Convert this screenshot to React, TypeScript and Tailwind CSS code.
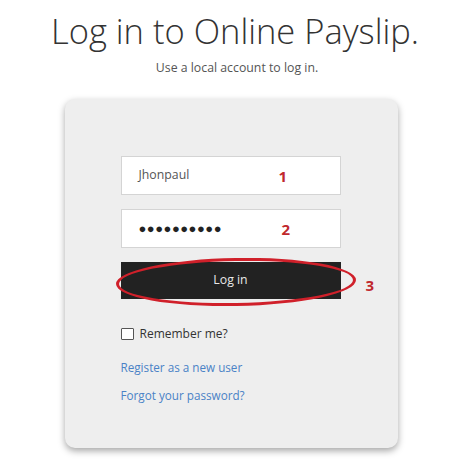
export default function App() {
  return (
    <div
      className="w-[474px] h-[474px] bg-white flex flex-col items-center overflow-hidden"
      style={{ fontFamily: '"Open Sans", "Liberation Sans", sans-serif' }}
    >
      <h1 className="mt-[11px] ml-[-4px] text-[34.5px] leading-[40px] font-light text-[#333] tracking-[0px]">
        Log in to Online Payslip.
      </h1>
      <p className="mt-[9px] text-[12.3px] leading-[16px] text-[#555]">Use a local account to log in.</p>

      <div className="mt-[23px] ml-[-12px] w-[333px] h-[349px] rounded-[10px] bg-[#eeeeee] shadow-[0_3px_7px_rgba(0,0,0,0.35)] pt-[57px] pl-[56px]">
        <div className="relative w-[220px] h-[39px] bg-white border border-[#d4d4d4] flex items-center pl-[17px]">
          <span className="text-[12.3px] text-[#555]">Jhonpaul</span>
          <span className="absolute left-[157px] top-[8px] text-[15px] font-bold text-[#c0282d]">1</span>
        </div>

        <div className="relative mt-[14px] w-[220px] h-[39px] bg-white border border-[#d4d4d4] flex items-center pl-[17px]">
          <span className="text-[13px] tracking-[0.5px] text-[#222] leading-none">●●●●●●●●●●</span>
          <span className="absolute left-[160px] top-[8px] text-[15px] font-bold text-[#c0282d]">2</span>
        </div>

        <div className="relative mt-[14px] w-[220px]">
          <button className="w-[220px] h-[37px] bg-[#222222] text-[#e8e8e8] text-[12.3px] flex items-center justify-center">
            Log in
          </button>
          <div className="absolute left-[-5px] top-[-4px] w-[240px] h-[48px] rounded-[50%] border-[3.5px] border-[#d0202a] -rotate-[1deg]" />
          <span className="absolute left-[245px] top-[12px] text-[15px] font-bold text-[#c0282d]">3</span>
        </div>

        <label className="mt-[27px] flex items-center gap-[6px]">
          <span className="w-[13px] h-[12px] border border-[#555] bg-white rounded-[1px]" />
          <span className="text-[12px] leading-[16px] text-[#333]">Remember me?</span>
        </label>

        <div className="mt-[17px] text-[11.7px] leading-[16px] text-[#4a82c6]">Register as a new user</div>
        <div className="mt-[12px] text-[11.7px] leading-[16px] text-[#4a82c6]">Forgot your password?</div>
      </div>
    </div>
  );
}
